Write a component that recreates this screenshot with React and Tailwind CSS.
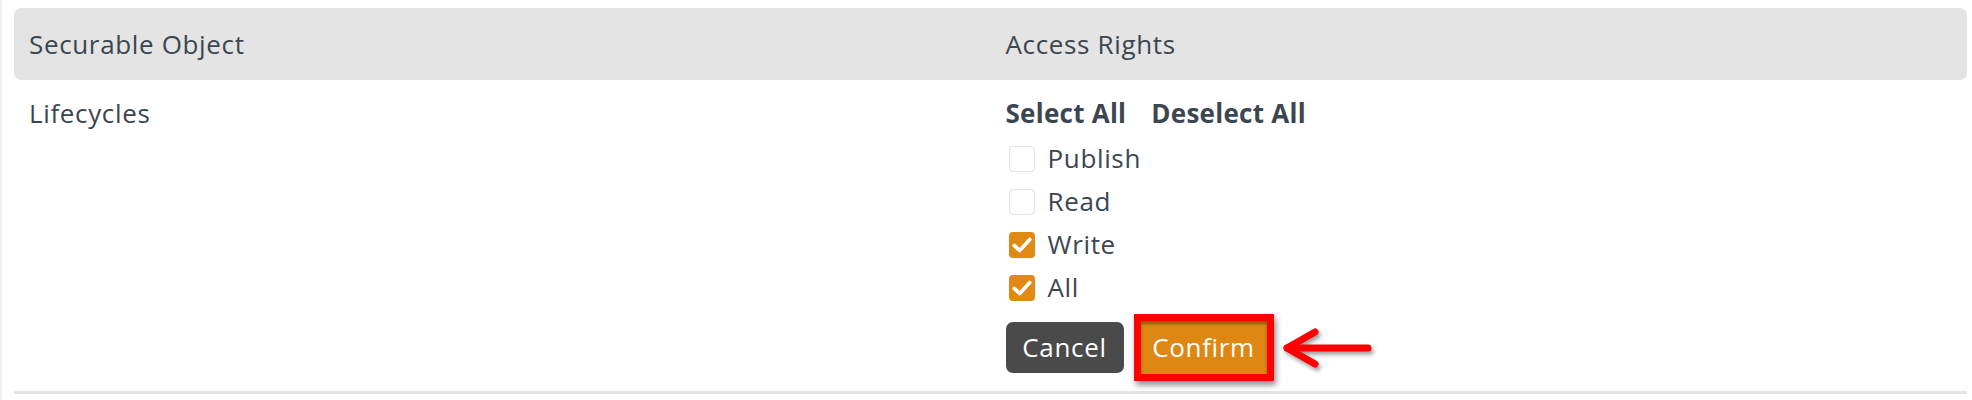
import { useState } from 'react'

const rights = [
  { key: 'publish', label: 'Publish', checked: false },
  { key: 'read', label: 'Read', checked: false },
  { key: 'write', label: 'Write', checked: true },
  { key: 'all', label: 'All', checked: true },
]

function CheckBox({ checked, onChange }) {
  return (
    <button
      type="button"
      onClick={onChange}
      className={
        checked
          ? 'w-[26px] h-[26px] rounded-[4px] bg-[#e08a14] flex items-center justify-center flex-shrink-0'
          : 'w-[26px] h-[26px] rounded-[4px] bg-white border border-[#e2e2e2] flex-shrink-0'
      }
    >
      {checked && (
        <svg viewBox="0 0 24 24" width="22" height="22" fill="none" stroke="#fff" strokeWidth="4" strokeLinecap="round" strokeLinejoin="round">
          <polyline points="3.5 12.5 9.5 18 20.5 6" />
        </svg>
      )}
    </button>
  )
}

export default function App() {
  const [items, setItems] = useState(rights)

  const toggle = (key) =>
    setItems((prev) => prev.map((it) => (it.key === key ? { ...it, checked: !it.checked } : it)))

  return (
    <div className="w-[1972px] h-[400px] bg-white border-l-2 border-[#f0f0f0] text-[#3c4650] text-[26px] tracking-[0.025em]" style={{ fontFamily: '"Open Sans", Lato, sans-serif' }}>
      <div className="pl-[12px] pr-[5px] pt-[8px]">
        {/* header */}
        <div className="h-[72px] bg-[#e4e4e4] rounded-[7px] flex items-center">
          <div className="w-1/2 pl-[15px]">Securable Object</div>
          <div className="w-1/2 pl-[15px]">Access Rights</div>
        </div>

        {/* row */}
        <div className="flex pt-[16px] pb-[10px] border-b-[3px] border-[#e4e4e4]">
          <div className="w-1/2 pl-[15px] leading-[34px]">Lifecycles</div>
          <div className="w-1/2 pl-[15px]">
            <div className="flex gap-[25px] font-bold tracking-[0.01em] leading-[34px] h-[41px]">
              <span>Select All</span>
              <span>Deselect All</span>
            </div>
            {items.map((it) => (
              <div key={it.key} className="h-[43px] flex items-center gap-[13px] pl-[3px]">
                <CheckBox checked={it.checked} onChange={() => toggle(it.key)} />
                <span>{it.label}</span>
              </div>
            ))}
            <div className="flex items-center gap-[10px] mt-[5px]">
              <button type="button" className="h-[51px] w-[118px] rounded-[7px] bg-[#4a4a4a] text-white">
                Cancel
              </button>
              <div className="border-[7px] border-[#ff0000] shadow-[2px_4px_6px_rgba(0,0,0,0.45)]">
                <button type="button" className="h-[53px] w-[126px] bg-[#de8712] text-white shadow-[inset_0_3px_3px_rgba(0,0,0,0.35)]">
                  Confirm
                </button>
              </div>
              <svg width="96" height="46" viewBox="0 0 96 46" className="-ml-[6px]" style={{ filter: 'drop-shadow(2px 3px 2px rgba(0,0,0,0.4))' }}>
                <g fill="none" stroke="#ff0000" strokeWidth="7" strokeLinecap="round" strokeLinejoin="round">
                  <line x1="9" y1="23" x2="90" y2="23" />
                  <polyline points="37 7 9 23 37 39" />
                </g>
              </svg>
            </div>
          </div>
        </div>
      </div>
    </div>
  )
}
